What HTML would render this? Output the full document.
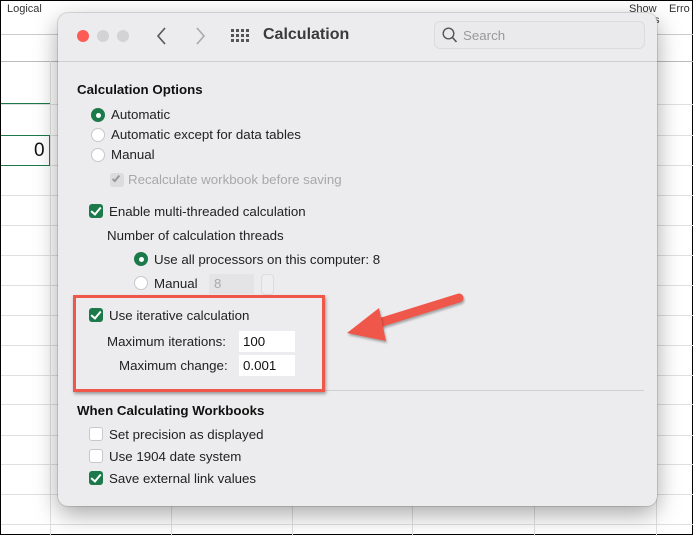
<!DOCTYPE html>
<html><head><style>
*{margin:0;padding:0;box-sizing:border-box}
body{width:693px;height:535px;overflow:hidden;background:#fff;font-family:"Liberation Sans",sans-serif;position:relative;border:1px solid #000}
.a{position:absolute}
.hl{position:absolute;left:0;width:693px;height:1px;background:#e0e0e0}
.vl{position:absolute;top:60px;width:1px;height:475px;background:#e0e0e0}
.t{position:absolute;font-size:13.3px;color:#222;white-space:nowrap}
.win{position:absolute;left:57px;top:12px;width:599px;height:493px;background:#ecebed;border-radius:10px;box-shadow:0 8px 24px rgba(0,0,0,.35),0 0 0 1px rgba(0,0,0,.12)}
.cb{position:absolute;width:14px;height:14px;border-radius:3px}
.on{background:#1c7a4a}
.off{background:#fff;border:1px solid #c8c8c8}
.cb.on::after{content:"";position:absolute;left:4px;top:1px;width:4px;height:8px;border:solid #fff;border-width:0 2px 2px 0;transform:rotate(40deg)}
.rd{position:absolute;width:14px;height:14px;border-radius:50%}
.rd.on{background:#1c7a4a}
.rd.on::after{content:"";position:absolute;left:4.5px;top:4.5px;width:5px;height:5px;border-radius:50%;background:#fff}
.inp{position:absolute;background:#fff;height:21px;font-size:13.3px;padding:3px 4px;color:#111}
</style></head><body>
<div class="t" style="left:6px;top:2px;font-size:11px;color:#333">Logical</div>
<div class="t" style="left:628px;top:2px;font-size:11px;color:#333">Show</div>
<div class="t" style="left:668px;top:2px;font-size:11px;color:#333">Erro</div>
<div class="t" style="left:648px;top:14px;font-size:10px;color:#333">as</div>
<div class="hl" style="top:33px;background:#ccc"></div>
<div class="hl" style="top:60px;background:#bbb"></div>
<div class="a" style="left:0;top:102px;width:49px;height:2px;background:#1c7a4a"></div>
<div class="hl" style="top:103px"></div><div class="hl" style="top:134px"></div><div class="hl" style="top:164px"></div>
<div class="hl" style="top:194px"></div><div class="hl" style="top:224px"></div><div class="hl" style="top:254px"></div>
<div class="hl" style="top:284px"></div><div class="hl" style="top:314px"></div><div class="hl" style="top:344px"></div>
<div class="hl" style="top:374px"></div><div class="hl" style="top:403px"></div><div class="hl" style="top:434px"></div>
<div class="hl" style="top:463px"></div><div class="hl" style="top:493px"></div><div class="hl" style="top:523px"></div>
<div class="vl" style="left:49px"></div><div class="vl" style="left:170px"></div><div class="vl" style="left:291px"></div><div class="vl" style="left:411px"></div><div class="vl" style="left:533px"></div><div class="vl" style="left:655px"></div>
<div class="a" style="left:0;top:134px;width:49px;height:31px;border:1px solid #1c7a4a;border-left:none;background:#fff"></div>
<div class="t" style="left:33px;top:139px;font-size:19px;color:#111">0</div>

<div class="win">
<div class="a" style="left:19px;top:17px;width:12px;height:12px;border-radius:50%;background:#fd5b56"></div>
<div class="a" style="left:39px;top:17px;width:12px;height:12px;border-radius:50%;background:#d3d2d4"></div>
<div class="a" style="left:59px;top:17px;width:12px;height:12px;border-radius:50%;background:#d3d2d4"></div>
<svg class="a" style="left:98px;top:13px" width="12" height="20"><path d="M9 2L2 10L9 18" stroke="#555" stroke-width="1.6" fill="none"/></svg>
<svg class="a" style="left:136px;top:13px" width="12" height="20"><path d="M3 2L10 10L3 18" stroke="#aaa" stroke-width="1.6" fill="none"/></svg>
<svg class="a" style="left:173px;top:16px" width="18" height="14" fill="#555"><rect x="0" y="0" width="3" height="3"/><rect x="5" y="0" width="3" height="3"/><rect x="10" y="0" width="3" height="3"/><rect x="15" y="0" width="3" height="3"/><rect x="0" y="5" width="3" height="3"/><rect x="5" y="5" width="3" height="3"/><rect x="10" y="5" width="3" height="3"/><rect x="15" y="5" width="3" height="3"/><rect x="0" y="10" width="3" height="3"/><rect x="5" y="10" width="3" height="3"/><rect x="10" y="10" width="3" height="3"/><rect x="15" y="10" width="3" height="3"/></svg>
<div class="t" style="left:205px;top:13px;font-size:16px;font-weight:bold;color:#3a3a3a">Calculation</div>
<div class="a" style="left:376px;top:8px;width:211px;height:28px;border-radius:6px;background:#eae9eb;border:1px solid #dcdbdd"></div>
<svg class="a" style="left:384px;top:14px" width="16" height="17"><circle cx="6.5" cy="6.5" r="5.3" stroke="#555" stroke-width="1.4" fill="none"/><path d="M10.5 10.5L14.5 15" stroke="#555" stroke-width="1.6"/></svg>
<div class="t" style="left:405px;top:15px;color:#999">Search</div>
<div class="a" style="left:0;top:48px;width:599px;height:1px;background:#d0cfd1"></div>

<div class="t" style="left:19px;top:69px;font-weight:bold;color:#111">Calculation Options</div>
<div class="rd on" style="left:33px;top:95px"></div><div class="t" style="left:53px;top:94px">Automatic</div>
<div class="rd off" style="left:33px;top:115px"></div><div class="t" style="left:53px;top:114px">Automatic except for data tables</div>
<div class="rd off" style="left:33px;top:135px"></div><div class="t" style="left:53px;top:134px">Manual</div>
<div class="cb" style="left:52px;top:160px;background:#dcdbdd"></div><div class="a" style="left:56px;top:161px;width:4px;height:8px;border:solid #999;border-width:0 2px 2px 0;transform:rotate(40deg)"></div>
<div class="t" style="left:70px;top:159px;color:#a8a8a8">Recalculate workbook before saving</div>
<div class="cb on" style="left:31px;top:191px"></div><div class="t" style="left:51px;top:191px">Enable multi-threaded calculation</div>
<div class="t" style="left:49px;top:215px">Number of calculation threads</div>
<div class="rd on" style="left:76px;top:239px"></div><div class="t" style="left:96px;top:239px">Use all processors on this computer: 8</div>
<div class="rd off" style="left:76px;top:263px"></div><div class="t" style="left:96px;top:263px">Manual</div>
<div class="a" style="left:151px;top:261px;width:45px;height:20px;background:#e4e3e5"></div><div class="t" style="left:156px;top:263px;color:#aaa">8</div>
<div class="a" style="left:203px;top:261px;width:13px;height:21px;border:1px solid #ddd;border-radius:4px;background:#eeedef"></div>

<div class="cb on" style="left:31px;top:295px"></div><div class="t" style="left:51px;top:295px">Use iterative calculation</div>
<div class="t" style="left:49px;top:321px">Maximum iterations:</div>
<div class="inp" style="left:181px;top:318px;width:56px">100</div>
<div class="t" style="left:61px;top:345px">Maximum change:</div>
<div class="inp" style="left:181px;top:342px;width:56px">0.001</div>
<div class="a" style="top:377px;background:#d0cfd1;left:18px;width:568px;height:1px"></div>
<div class="t" style="left:19px;top:390px;font-weight:bold;color:#111">When Calculating Workbooks</div>
<div class="cb off" style="left:31px;top:414px"></div><div class="t" style="left:51px;top:414px">Set precision as displayed</div>
<div class="cb off" style="left:31px;top:436px"></div><div class="t" style="left:51px;top:436px">Use 1904 date system</div>
<div class="cb on" style="left:31px;top:458px"></div><div class="t" style="left:51px;top:458px">Save external link values</div>
</div>

<div class="a" style="left:72px;top:294px;width:252px;height:97px;border:3px solid #f0574b;box-shadow:1px 2px 3px rgba(0,0,0,.35)"></div>
<svg class="a" style="left:340px;top:290px" width="125" height="60"><path d="M118 7L28 35" stroke="#f0574b" stroke-width="9" stroke-linecap="round" fill="none" filter="drop-shadow(1px 2px 1px rgba(0,0,0,.3))"/><path d="M6 42L38 17L45 50Z" fill="#f0574b" style="filter:drop-shadow(1px 2px 1px rgba(0,0,0,.3))"/></svg>
</body></html>
